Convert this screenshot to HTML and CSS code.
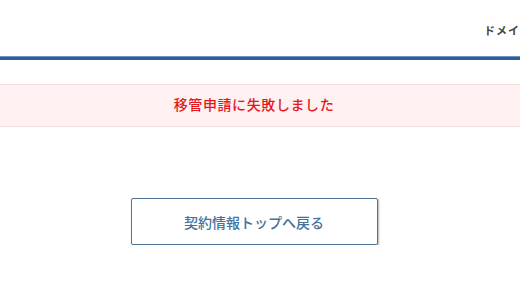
FILE: index.html
```html
<!DOCTYPE html>
<html lang="ja">
<head>
    <meta charset="UTF-8">
    <meta name="viewport" content="width=device-width, initial-scale=1.0">
    <title>移管申請</title>
    <link rel="stylesheet" href="styles.css">
</head>
<body>
    <header class="header">
        <nav class="header-nav">ドメイン管理</nav>
    </header>

    <div class="error-box">
        <p class="error-text">移管申請に失敗しました</p>
    </div>

    <div class="actions">
        <a class="back-button" href="#">契約情報トップへ戻る</a>
    </div>
</body>
</html>
```

FILE: styles.css
```css
body {
    margin: 0;
    background-color: #fff;
    font-family: "Noto Sans CJK JP", "Noto Sans", sans-serif;
    overflow: hidden;
}
.header {
    height: 57px;
    border-bottom: 3px solid #2a5f99;
    box-shadow: inset 0 -1px 0 #6f93bd;
    overflow: hidden;
}
.header-nav {
    padding: 22px 0 0 484px;
    font-size: 11px;
    font-weight: bold;
    color: #444;
    white-space: nowrap;
    letter-spacing: 1px;
}
.error-box {
    margin-top: 24px;
    height: 38px;
    display: flex;
    align-items: center;
    justify-content: center;
    background-color: #fff1f1;
    border-top: 1px solid #f3dede;
    border-bottom: 1px solid #f3dede;
    padding: 0 12px 3px 0;
}
.error-text {
    margin: 0;
    font-size: 14px;
    font-weight: 500;
    color: #e4181c;
    letter-spacing: 0.6px;
}
.actions {
    display: flex;
    justify-content: center;
    padding: 71px 12px 0 0;
}
.back-button {
    display: flex;
    align-items: center;
    justify-content: center;
    width: 245px;
    height: 45px;
    border: 1px solid #4f7394;
    border-radius: 2px;
    box-shadow: 1px 1px 2px rgba(0, 0, 0, 0.3);
    background-color: #fff;
    color: #44729d;
    font-size: 14px;
    font-weight: 500;
    text-decoration: none;
}
```
